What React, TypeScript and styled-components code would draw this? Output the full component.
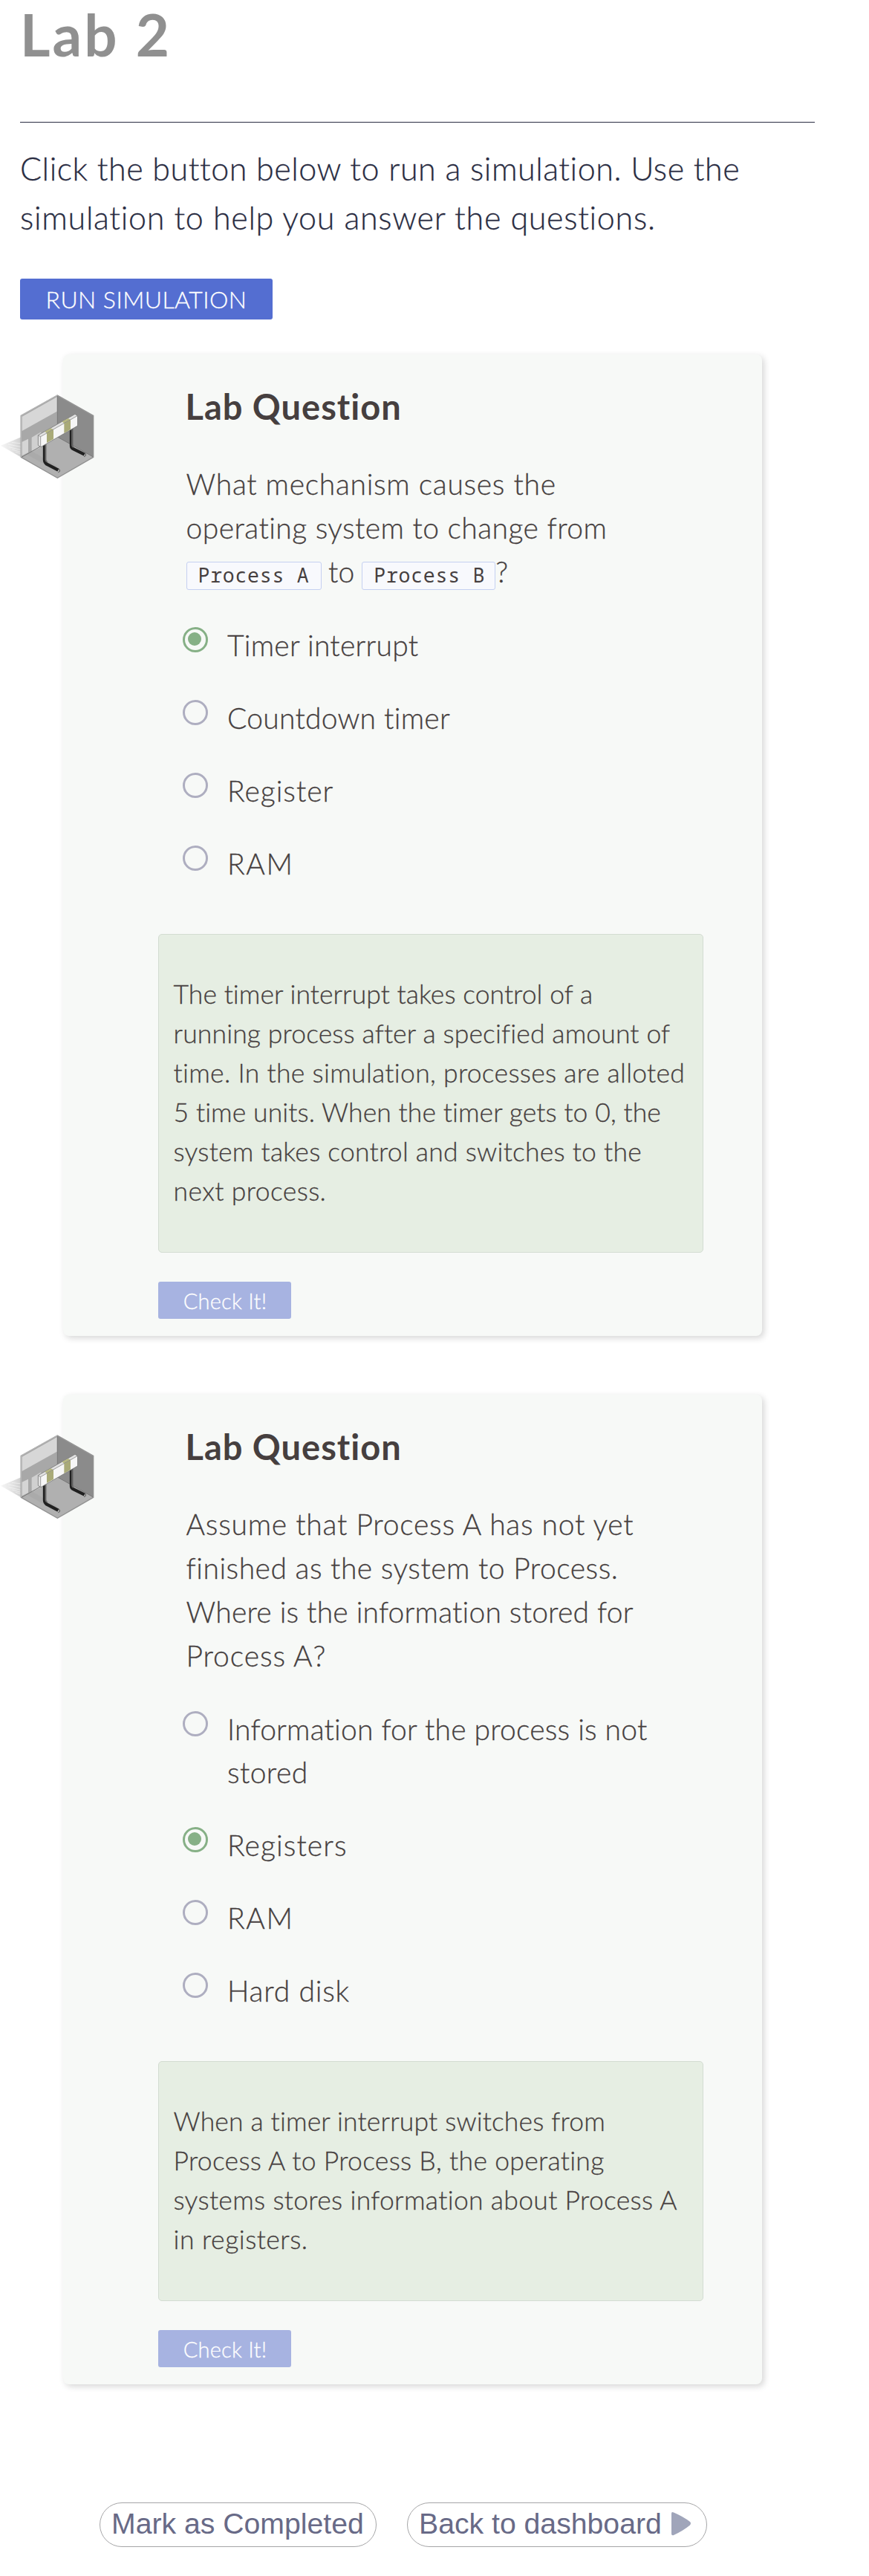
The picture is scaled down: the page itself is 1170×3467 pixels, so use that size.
import React, { useState } from 'react';
import styled, { createGlobalStyle } from 'styled-components';

const GlobalStyle = createGlobalStyle`
  * { box-sizing: border-box; }
  body {
    margin: 0;
    background: #fff;
    color: #292c42;
    font-family: Lato, "Open Sans", sans-serif;
    font-weight: 300;
  }
`;

const Page = styled.main`
  width: 1170px;
  height: 3467px;
  padding: 0 73px 0 27px;
  overflow: hidden;
`;

const Title = styled.h1`
  margin: 0;
  color: #909090;
  font-size: 78px;
  font-weight: 700;
  line-height: 92px;
  letter-spacing: 3.1px;
`;

const Rule = styled.div`
  height: 1px;
  margin: 72px 0 29px;
  background: #292c42;
`;

const Line = styled.span<{ $track?: number }>`
  display: block;
  white-space: nowrap;
  font-variant-ligatures: none;
  letter-spacing: ${p => p.$track ?? 0}px;
`;

const Intro = styled.p`
  margin: 0 0 49px;
  font-size: 43px;
  line-height: 66px;
  -webkit-text-stroke: 0.3px currentColor;
`;

const RunButton = styled.button`
  display: block;
  width: 340px;
  height: 55px;
  margin: 0 0 47px;
  padding: 0;
  border: 0;
  border-radius: 3px;
  background: #546ed1;
  color: #fff;
  font: 300 32px/55px Lato, sans-serif;
  letter-spacing: 0.45px;
  -webkit-text-stroke: 0.3px currentColor;
`;

const Card = styled.section`
  position: relative;
  width: 941px;
  margin: 0 0 79px 58px;
  padding: 40px 79px 23px 128px;
  border-radius: 8px;
  background: #f7f9f7;
  box-shadow: 3px 3px 9px rgba(0, 0, 0, 0.16);
  color: #463f3f;
`;

const CardIcon = styled.svg`
  position: absolute;
  left: -86px;
  top: 43px;
  width: 150px;
  height: 140px;
`;

const Heading = styled.h2`
  margin: 0 0 45px 36.5px;
  font-size: 47px;
  font-weight: 700;
  line-height: 60px;
  letter-spacing: 1px;
  font-variant-ligatures: none;
`;

const Question = styled.div`
  margin: 0 0 40px 37.5px;
  font-size: 39px;
  line-height: 59px;
  -webkit-text-stroke: 0.3px currentColor;
`;

const Code = styled.code<{ $width: number }>`
  display: inline-block;
  width: ${p => p.$width}px;
  padding-left: 15px;
  border: 1px solid #c5d0f1;
  border-radius: 3px;
  background: #f8f9fd;
  font: 400 26.5px/35.5px "Noto Sans Mono", "DejaVu Sans Mono", monospace;
  letter-spacing: 0.75px;
  -webkit-text-stroke: 0;
`;

const Joiner = styled.span`
  margin: 0 -0.5px 0 -1px;
`;

const Options = styled.div`
  display: flex;
  flex-direction: column;
  gap: 40px;
  margin: 0 0 66px 33px;
`;

const Option = styled.label`
  display: flex;
  gap: 26px;
  font-size: 39px;
  line-height: 58px;
  -webkit-text-stroke: 0.3px currentColor;
`;

const Radio = styled.span<{ $on: boolean }>`
  flex: none;
  width: 34px;
  height: 34px;
  margin-top: 5px;
  padding: 4px;
  border: 3px solid ${p => (p.$on ? '#86b086' : '#aeaec0')};
  border-radius: 50%;
`;

const Dot = styled.span`
  display: block;
  width: 18px;
  height: 18px;
  border-radius: 50%;
  background: #86b086;
`;

const Feedback = styled.div`
  width: 733.5px;
  margin-bottom: 39px;
  padding: 53px 0 56px 19.5px;
  border: 1px solid #d3dcd2;
  border-radius: 5px;
  background: #e6eee3;
  font-size: 35.5px;
  line-height: 53px;
  -webkit-text-stroke: 0.3px currentColor;
`;

const CheckButton = styled.button`
  display: block;
  width: 179px;
  height: 50px;
  padding: 1px 0 0 1px;
  border: 0;
  border-radius: 3px;
  background: #a7b3e1;
  color: #fff;
  font: 300 29px/49px Lato, sans-serif;
  letter-spacing: 0.25px;
  -webkit-text-stroke: 0.3px currentColor;
`;

const Footer = styled.footer`
  display: flex;
  gap: 41px;
  margin: 159px 0 0 107px;
`;

const Pill = styled.button<{ $width: number }>`
  display: flex;
  align-items: center;
  width: ${p => p.$width}px;
  height: 60px;
  padding: 0 0 2px 15px;
  border: 1px solid #a6a6a8;
  border-radius: 30px;
  background: #fff;
  color: #686a87;
  font: 400 39.2px "Liberation Sans", Arial, sans-serif;
  white-space: nowrap;
`;

const Play = styled.svg`
  flex: none;
  width: 28px;
  height: 33px;
  margin: 0 0 2px 12px;
`;

function BarrierIcon() {
  return (
    <CardIcon viewBox="0 0 450 420" aria-hidden="true">
      <defs>
        <linearGradient id="cast" x1="1" x2="0" y1="0" y2="0">
          <stop offset="0" stopColor="#cdcdcd" />
          <stop offset="1" stopColor="#ececec" stopOpacity="0.5" />
        </linearGradient>
      </defs>
      <path d="M90 204 6 239l84 48z" fill="url(#cast)" />
      <path d="M50 226l40 5M36 234l54 11M38 245l52 12M52 255l38 11M66 265l24 8" stroke="#fff" strokeWidth="3" opacity=".5" />
      <path d="M235 36 380 118v168l-145 84L88 286V118z" fill="#a8a8a8" />
      <path d="M235 38 378 119v165L235 204z" fill="#8b8b8b" />
      <path d="M235 204 378 284 235 368 90 286z" fill="#b0b0b0" />
      <path d="M132 262l-22 12 104 59 20-11z" fill="#a6a6a6" opacity=".6" />
      <path d="M92 122 233 43v58L92 180z" fill="#d7d7d7" />
      <path d="M92 224l25-12v55l-25 13z" fill="#d5d5d5" />
      <path d="M131 206l38-22v62l-38 18z" fill="#d0d0d0" />
      <path d="M235 36 380 118v168l-145 84L88 286V118z" fill="none" stroke="#929292" strokeWidth="4" />
      <path d="M235 38v166l143 80M235 204 90 286" fill="none" stroke="#777" strokeWidth="3" />
      <path d="M88 286V118L235 36" fill="none" stroke="#b8b8b8" strokeWidth="4" />
      <path d="M291 170v71q0 8 9 12l44 22" fill="none" stroke="#202020" strokeWidth="13" strokeLinejoin="round" />
      <path d="M294 170v68q0 5 6 8" fill="none" stroke="#686868" strokeWidth="5" />
      <path d="M183 230v68q0 9 9 16l46 24" fill="none" stroke="#202020" strokeWidth="13" strokeLinejoin="round" />
      <path d="M187 230v66q0 6 7 10" fill="none" stroke="#686868" strokeWidth="5" />
      <path d="M344 269l5 3v8l-7 4M240 333l4 3v8l-6 3" fill="none" stroke="#555" strokeWidth="3" />
      <path d="M157 197 306 112l10 7v40L168 245l-11-7z" fill="#e2e2e2" stroke="#777" strokeWidth="2.5" />
      <path d="M167 203 315 120v38l-148 85z" fill="#f6f6f6" />
      <path d="M192 190l27-15v38l-27 15zM262 150l26-15v39l-26 15z" fill="#a9aa78" />
      <path d="M192 190l-8-8 24-13 11 6zM262 150l-8-8 24-13 10 6z" fill="#b6b781" />
      <path d="M158 198l9 5 148-84M167 203v40" fill="none" stroke="#777" strokeWidth="2" />
    </CardIcon>
  );
}

type TextLine = [text: string, track: number];

function Lines({ items }: { items: TextLine[] }) {
  return (
    <>
      {items.map(([text, track]) => (
        <Line key={text} $track={track}>{text}</Line>
      ))}
    </>
  );
}

interface LabQuestionProps {
  question: React.ReactNode;
  options: TextLine[][];
  answer: number;
  feedback: TextLine[];
}

function LabQuestion({ question, options, answer, feedback }: LabQuestionProps) {
  const [selected, setSelected] = useState(answer);
  return (
    <Card>
      <BarrierIcon />
      <Heading>Lab Question</Heading>
      <Question>{question}</Question>
      <Options role="radiogroup">
        {options.map((lines, i) => (
          <Option key={i} onClick={() => setSelected(i)}>
            <Radio $on={i === selected}>{i === selected && <Dot />}</Radio>
            <span><Lines items={lines} /></span>
          </Option>
        ))}
      </Options>
      <Feedback><Lines items={feedback} /></Feedback>
      <CheckButton>Check It!</CheckButton>
    </Card>
  );
}

export default function App() {
  return (
    <Page>
      <GlobalStyle />
      <Title>Lab 2</Title>
      <Rule />
      <Intro>
        <Lines
          items={[
            ['Click the button below to run a simulation. Use the', 0.53],
            ['simulation to help you answer the questions.', 0.7],
          ]}
        />
      </Intro>
      <RunButton>RUN SIMULATION</RunButton>

      <LabQuestion
        question={
          <>
            <Lines
              items={[
                ['What mechanism causes the', 0.7],
                ['operating system to change from', 0.45],
              ]}
            />
            <Line>
              <Code $width={182}>Process A</Code> <Joiner>to</Joiner> <Code $width={180}>Process B</Code>?
            </Line>
          </>
        }
        options={[
          [['Timer interrupt', 0.25]],
          [['Countdown timer', 0.25]],
          [['Register', 1]],
          [['RAM', 1.6]],
        ]}
        answer={0}
        feedback={[
          ['The timer interrupt takes control of a', 0.05],
          ['running process after a specified amount of', 0.13],
          ['time. In the simulation, processes are alloted', 0.31],
          ['5 time units. When the timer gets to 0, the', 0.08],
          ['system takes control and switches to the', 0.25],
          ['next process.', 0.4],
        ]}
      />

      <LabQuestion
        question={
          <Lines
            items={[
              ['Assume that Process A has not yet', 0.75],
              ['finished as the system to Process.', 0.5],
              ['Where is the information stored for', 0.2],
              ['Process A?', 0.9],
            ]}
          />
        }
        options={[
          [['Information for the process is not', 0.2], ['stored', 0.4]],
          [['Registers', 1.1]],
          [['RAM', 1.6]],
          [['Hard disk', 0.8]],
        ]}
        answer={1}
        feedback={[
          ['When a timer interrupt switches from', 0.15],
          ['Process A to Process B, the operating', 0.3],
          ['systems stores information about Process A', 0.32],
          ['in registers.', 0.5],
        ]}
      />

      <Footer>
        <Pill $width={373}>Mark as Completed</Pill>
        <Pill $width={404}>
          Back to dashboard
          <Play viewBox="0 0 28 33">
            <path d="M1 3Q1 0 4 1.5Q17 7 26 14Q28 16 26 18.500Q17 26 4 32Q1 33 1 30z" fill="#a0a5ba" />
          </Play>
        </Pill>
      </Footer>
    </Page>
  );
}
